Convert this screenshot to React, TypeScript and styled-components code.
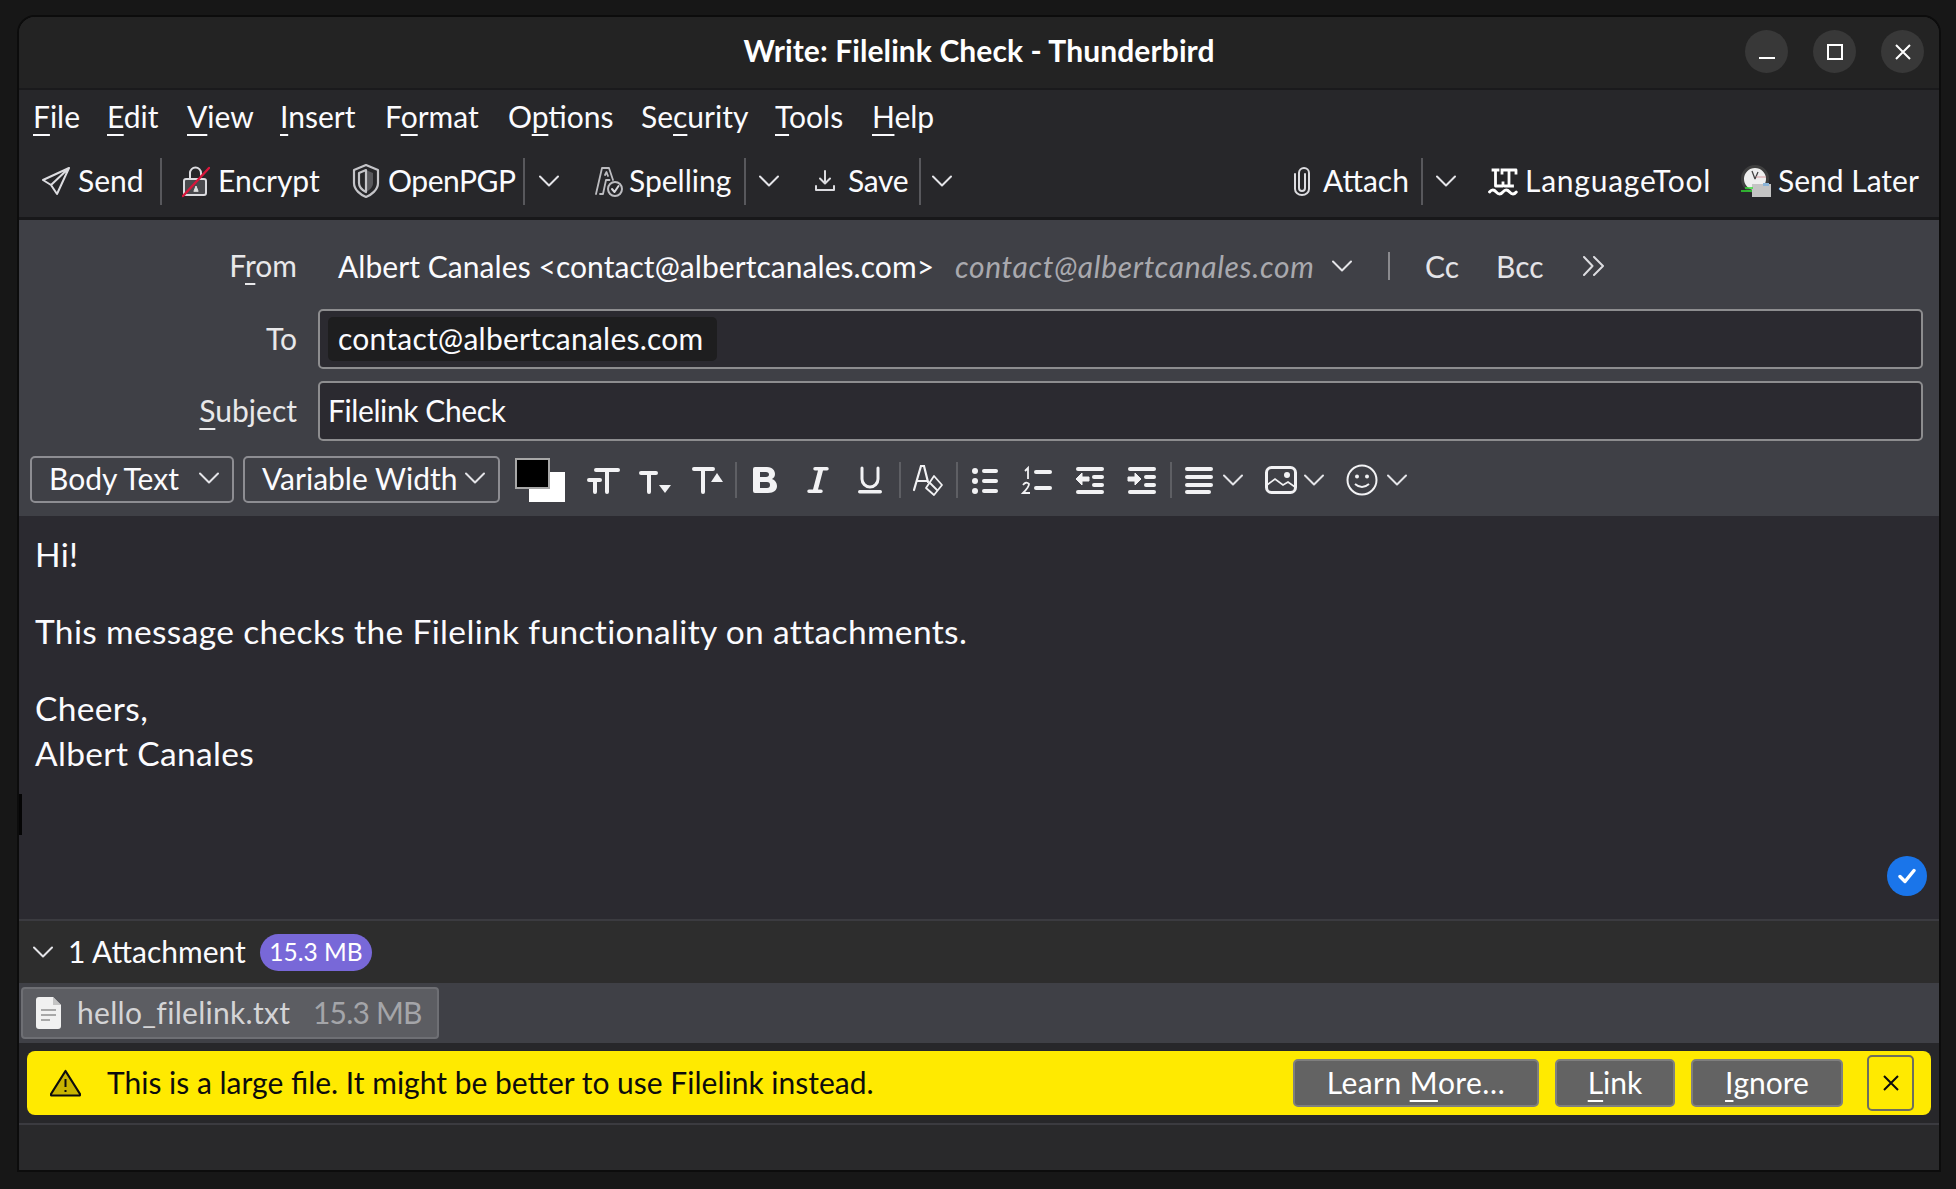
import React from "react";
import styled, { createGlobalStyle } from "styled-components";

const Global = createGlobalStyle`
  html, body { margin: 0; padding: 0; background: #171717; }
  body { font-family: "Lato", "Noto Sans", sans-serif; color: #fbfbfe; }
  #root { width: 1956px; height: 1189px; overflow: hidden; }
`;

const Desktop = styled.div`
  width: 1956px; height: 1189px; box-sizing: border-box;
  padding: 15px 15px 17px 17px; background: #171717; display: flex;
`;
const Win = styled.div`
  flex: 1; display: flex; flex-direction: column; position: relative;
  border: 2px solid #0c0c0c; border-radius: 18px 18px 0 0; overflow: hidden; background: #27272a;
`;
const TitleBar = styled.div`
  height: 71px; flex: none; background: #232323; border-bottom: 2px solid #1a1a1c; display: flex; box-sizing: content-box;
  align-items: center; justify-content: center; position: relative;
`;
const TitleText = styled.div`
  font: 700 30px "Lato", sans-serif; color: #fff; letter-spacing: 0.1px; margin-bottom: 5px;
`;
const WinButtons = styled.div`
  position: absolute; right: 15px; top: 13px; display: flex; gap: 25px;
`;
const WinButton = styled.div`
  width: 43px; height: 43px; border-radius: 50%; background: #383838; display: flex; align-items: center; justify-content: center;
`;
const MenuBar = styled.div`
  height: 55px; flex: none; background: #27272a; display: flex; align-items: center; padding: 0 0 3px 14px; box-sizing: border-box;
  font-size: 30px;
`;
const MenuItem = styled.div<{ $w: number }>`
  width: ${(p) => p.$w}px; white-space: nowrap;
`;
const Key = styled.span`
  text-decoration: underline; text-decoration-thickness: 2px; text-underline-offset: 6px; text-decoration-skip-ink: none;
`;
const ToolBar = styled.div`
  height: 72px; flex: none; background: #27272a; border-bottom: 3px solid #18181a; box-sizing: content-box;
  display: flex; align-items: center; padding: 0 20px 0 23px; font-size: 30px;
`;
const Spacer = styled.div` flex: 1; `;
const ToolIcon = styled.svg<{ $ml?: number }>`
  flex: none; margin-left: ${(p) => p.$ml ?? 0}px; fill: none; stroke: #dcdce0; stroke-width: 2; stroke-linecap: round; stroke-linejoin: round;
`;
const ToolLabel = styled.span<{ $ml?: number; $w: number; $ls?: number }>`
  margin-left: ${(p) => p.$ml ?? 8}px; margin-bottom: 2px; width: ${(p) => p.$w}px; white-space: nowrap; flex: none; letter-spacing: ${(p) => p.$ls ?? 0}px;
`;
const ToolSep = styled.div<{ $ml: number }>`
  width: 2px; height: 47px; margin-left: ${(p) => p.$ml}px; background: #58585c; flex: none;
`;
const Header = styled.div`
  background: #3f4046; flex: none; height: 230px; box-sizing: border-box; padding: 17px 16px 0 0; display: flex; flex-direction: column;
`;
const Row = styled.div`
  display: flex; align-items: center; height: 60px; margin-bottom: 12px; font-size: 30px; flex: none;
`;
const RowLabel = styled.div`
  width: 278px; flex: none; text-align: right; margin-right: 21px; white-space: nowrap; color: #e8e8ea; margin-bottom: 2px;
`;
const FromRow = styled(Row)`
  height: 58px; margin-bottom: 14px;
`;
const Identity = styled.span` margin-left: 20px; width: 617px; white-space: nowrap; flex: none; letter-spacing: 0.06px; `;
const IdentityMail = styled.span` font-style: italic; color: #a9a9ae; width: 377px; white-space: nowrap; flex: none; letter-spacing: 0.65px; `;
const Bar = styled.div` width: 2px; height: 28px; background: #8a8a8e; margin-left: 36px; `;
const RowLink = styled.span<{ $ml: number }>` margin-left: ${(p) => p.$ml}px; color: #e4e4e8; `;
const Field = styled.div<{ $ls?: number }>`
  flex: 1; height: 100%; box-sizing: border-box; background: #2b2a30; border: 2px solid #8d8d8f; border-radius: 5px;
  display: flex; align-items: center; padding: 0 0 2px 8px; letter-spacing: ${(p) => p.$ls ?? 0}px;
`;
const Pill = styled.span`
  background: #1e1e1f; border-radius: 5px; height: 44px; margin-top: 2px; display: inline-flex; align-items: center; padding: 0 13px 2px 10px; box-sizing: border-box; font-size: 30px; letter-spacing: 0.25px;
`;
const FormatBar = styled.div`
  background: #3f4046; height: 67px; flex: none; margin-top: -1px; display: flex; align-items: center; padding-left: 11px; padding-bottom: 6px; box-sizing: border-box;
`;
const Select = styled.div<{ $w: number; $ml?: number }>`
  width: ${(p) => p.$w}px; margin-left: ${(p) => p.$ml ?? 0}px; height: 47px; box-sizing: border-box; border: 2px solid #8d8d92; border-radius: 5px;
  display: flex; align-items: center; justify-content: space-between; padding: 0 13px 3px 17px; font-size: 30px; flex: none; white-space: nowrap;
`;
const Colors = styled.div`
  width: 50px; height: 44px; margin-left: 15px; position: relative; flex: none;
`;
const Fore = styled.div`
  position: absolute; left: 0; top: 0; width: 35px; height: 31px; box-sizing: border-box; background: #000; border: 2px solid #a8a8a8; z-index: 1;
`;
const Back = styled.div`
  position: absolute; left: 14px; top: 14px; width: 36px; height: 30px; background: #fff;
`;
const FmtSep = styled.div<{ $ml: number }>`
  width: 2px; height: 36px; background: #5e5f64; margin-left: ${(p) => p.$ml}px; flex: none;
`;
const FmtIcon = styled.svg<{ $ml: number }>`
  flex: none; margin-left: ${(p) => p.$ml}px; color: #f2f2f4; overflow: visible;
`;
const Body = styled.div`
  flex: 1; background: #2b2a30; padding: 16px 0 0 16px; font-size: 33.5px; letter-spacing: 0.35px; line-height: 45px; position: relative; box-sizing: border-box; border-bottom: 2px solid #3b3b40;
`;
const Para = styled.p` margin: 0 0 32px; white-space: nowrap; `;
const Check = styled.div`
  position: absolute; right: 12px; bottom: 23px; width: 40px; height: 40px; border-radius: 50%; background: #1a75ea; display: flex; align-items: center; justify-content: center;
`;
const Resize = styled.div`
  position: absolute; left: 0; top: 777px; width: 3px; height: 41px; background: #050505;
`;
const AttachHead = styled.div`
  height: 62px; flex: none; background: #2d2d2d; display: flex; align-items: center; padding-left: 14px; font-size: 30px;
`;
const Badge = styled.span`
  margin-left: 13px; width: 112px; height: 37px; box-sizing: border-box; padding-bottom: 1px; border-radius: 19px; background: #7868d8; color: #fff; font-size: 24.5px; display: flex; align-items: center; justify-content: center;
`;
const AttachList = styled.div`
  height: 60px; flex: none; background: #3f4046; padding: 4px 0 4px 2px; box-sizing: border-box; display: flex;
`;
const AttachItem = styled.div`
  width: 418px; box-sizing: border-box; background: #5c5d62; border: 2px solid #6e6f74; border-radius: 4px; display: flex; align-items: center; padding: 0 0 0 13px; font-size: 30px; color: #d4d4d6;
`;
const FileName = styled.span` margin-left: 16px; width: 236px; white-space: nowrap; letter-spacing: 0.3px; margin-bottom: 2px; `;
const FileSize = styled.span` color: #a4a5a9; white-space: nowrap; letter-spacing: -0.8px; margin-bottom: 2px; `;
const NoticeArea = styled.div`
  height: 82px; flex: none; padding: 8px 8px 8px 8px; box-sizing: border-box; background: #27272a; border-bottom: 2px solid #3b3b40;
`;
const Notice = styled.div`
  height: 64px; background: #ffea00; border-radius: 8px; display: flex; align-items: center; color: #0c0c0d; font-size: 30px; padding-left: 23px;
`;
const NoticeText = styled.span` margin-left: 26px; margin-bottom: 2px; white-space: nowrap; width: 1186px; flex: none; `;
const NoticeBtn = styled.div<{ $w: number; $ml: number; $ls?: number }>`
  width: ${(p) => p.$w}px; margin-left: ${(p) => p.$ml}px; height: 48px; box-sizing: border-box; background: #636363; border: 2px solid #7f7f7f; border-radius: 5px; color: #fff;
  display: flex; align-items: center; justify-content: center; flex: none; white-space: nowrap; padding-bottom: 3px; letter-spacing: ${(p) => p.$ls ?? 0}px;
`;
const CloseBtn = styled.div`
  width: 47px; height: 56px; margin-left: 24px; box-sizing: border-box; border: 2px solid #6e6e5e; border-radius: 5px; display: flex; align-items: center; justify-content: center;
`;
const StatusBar = styled.div` height: 45px; flex: none; background: #29292b; `;

const Chev = ({ ml = 0, w = 20, color = "#e4e4e8" }: { ml?: number; w?: number; color?: string }) => (
  <ToolIcon $ml={ml} width={w} height={12} viewBox="0 0 20 12" style={{ stroke: color }}>
    <path d="M1 1.5 L10 10.5 L19 1.5" />
  </ToolIcon>
);

const F = (p: React.SVGProps<SVGPathElement>) => <path fill="currentColor" {...p} />;

export default function App() {
  return (
    <Desktop>
      <Global />
      <Win>
        <TitleBar>
          <TitleText>Write: Filelink Check - Thunderbird</TitleText>
          <WinButtons>
            <WinButton>
              <svg width="16" height="16" viewBox="0 0 16 16"><rect x="0" y="13" width="16" height="2" fill="#fff" /></svg>
            </WinButton>
            <WinButton>
              <svg width="16" height="16" viewBox="0 0 16 16"><rect x="1" y="1" width="14" height="14" fill="none" stroke="#fff" strokeWidth="2" /></svg>
            </WinButton>
            <WinButton>
              <svg width="16" height="16" viewBox="0 0 16 16"><path d="M1 1 L15 15 M15 1 L1 15" stroke="#fff" strokeWidth="2" /></svg>
            </WinButton>
          </WinButtons>
        </TitleBar>
        <MenuBar>
          <MenuItem $w={74}><Key>F</Key>ile</MenuItem>
          <MenuItem $w={80}><Key>E</Key>dit</MenuItem>
          <MenuItem $w={93}><Key>V</Key>iew</MenuItem>
          <MenuItem $w={105}><Key>I</Key>nsert</MenuItem>
          <MenuItem $w={123}>F<Key>o</Key>rmat</MenuItem>
          <MenuItem $w={133}>O<Key>p</Key>tions</MenuItem>
          <MenuItem $w={134}>Se<Key>c</Key>urity</MenuItem>
          <MenuItem $w={97}><Key>T</Key>ools</MenuItem>
          <MenuItem $w={80}><Key>H</Key>elp</MenuItem>
        </MenuBar>
        <ToolBar>
          <ToolIcon width="28" height="30" viewBox="0 0 28 30">
            <path d="M27 2 L1 14 L9 19 L15 28 Z M27 2 L9 19" />
          </ToolIcon>
          <ToolLabel $w={64}>Send</ToolLabel>
          <ToolSep $ml={18} />
          <ToolIcon $ml={20} width="28" height="34" viewBox="0 0 28 34">
            <path d="M8 15 V9 a5.500 5.500 0 0 1 11 0 V11" />
            <path d="M4 15 H22 a2 2 0 0 1 2 2 V29 a2 2 0 0 1 -2 2 H4 a2 2 0 0 1 -2 -2 V17 a2 2 0 0 1 2 -2 Z" style={{ fill: "#4a4a4e" }} />
            <path d="M12 27 L14 22 L16 27 Z" style={{ fill: "#e0e0e0", stroke: "#e0e0e0", strokeWidth: 1 }} />
            <path d="M1 32 L27 4" style={{ stroke: "#d8173c", strokeWidth: 2.400 }} />
          </ToolIcon>
          <ToolLabel $w={101}>Encrypt</ToolLabel>
          <ToolIcon $ml={33} width="28" height="34" viewBox="0 0 28 34">
            <path d="M14 1 L26 6 V19 C26 26 19 31 14 33 C9 31 2 26 2 19 V6 Z" style={{ stroke: "#c4c4c8", strokeWidth: 2.200 }} />
            <path d="M14 6 L21 9 V19 C21 23 18 26 14 28 Z" style={{ fill: "#58585c", stroke: "none" }} />
            <path d="M14 6 L7 9 V19 C7 23 10 26 14 28 Z" style={{ stroke: "#c4c4c8", strokeWidth: 2.200 }} />
          </ToolIcon>
          <ToolLabel $w={126} $ls={-0.45}>OpenPGP</ToolLabel>
          <ToolSep $ml={9} />
          <Chev ml={14} />
          <ToolIcon $ml={36} width="28" height="32" viewBox="0 0 28 32">
            <path d="M1 29 L7 3 H14 L18 15 M5 29 H8 L11 15 H14.500 M10 10 L11.500 7 L13 11" style={{ stroke: "#bcbcc0", strokeWidth: 1.800 }} />
            <circle cx="20" cy="24" r="7" style={{ stroke: "#bcbcc0", fill: "#27272a" }} />
            <path d="M17 24 L19.500 27 L23.500 21" style={{ stroke: "#d8d8dc" }} />
          </ToolIcon>
          <ToolLabel $ml={6} $w={103}>Spelling</ToolLabel>
          <ToolSep $ml={12} />
          <Chev ml={13} />
          <ToolIcon $ml={36} width="20" height="22" viewBox="0 0 20 22">
            <path d="M10 1 V13 M5 8.500 L10 13.500 L15 8.500 M1 16 V20 H19 V16" />
          </ToolIcon>
          <ToolLabel $ml={13} $w={59} $ls={-0.3}>Save</ToolLabel>
          <ToolSep $ml={12} />
          <Chev ml={11} />
          <Spacer />
          <ToolIcon width="16" height="30" viewBox="0 0 16 30">
            <path d="M11 8 V22 a3 3 0 0 1 -6 0 V7 a5 5 0 0 1 10 0 V23 a7 6 0 0 1 -14 0 V8" />
          </ToolIcon>
          <ToolLabel $ml={13} $w={87}>Attach</ToolLabel>
          <ToolSep $ml={11} />
          <Chev ml={13} />
          <ToolIcon $ml={32} width="30" height="30" viewBox="0 0 30 30" style={{ stroke: "#fff", strokeWidth: 2.800, strokeLinecap: "square" }}>
            <path d="M5 4 H10 M7.500 4 V20 H15 V17 M14 4 H28 V7 M14 4 V7 M21 4 V20 M17.500 20 H24.500" />
            <path d="M1.500 26 q3.300 -4 6.700 0 t6.700 0 t6.700 0 t6.700 0" style={{ strokeLinecap: "round" }} />
          </ToolIcon>
          <ToolLabel $ml={7} $w={185} $ls={0.75}>LanguageTool</ToolLabel>
          <svg width="30" height="32" viewBox="0 0 30 32" style={{ marginLeft: 31, flex: "none" }}>
            <circle cx="14" cy="14" r="12.500" fill="#eeeeee" stroke="#3f3f3f" strokeWidth="3" />
            <path d="M14 14 L11 6 M14 14 L17 7" stroke="#444" strokeWidth="1.300" />
            <path d="M15 12 H25" stroke="#d89aa0" strokeWidth="1" />
            <rect x="11" y="19" width="19" height="13" fill="#c4c4c4" />
            <rect x="22" y="18" width="6" height="3" fill="#8ab4d8" />
            <path d="M0 26 H11 M4 23 H12" stroke="#33dd33" strokeWidth="1.600" />
          </svg>
          <ToolLabel $ml={7} $w={141}>Send Later</ToolLabel>
        </ToolBar>
        <Header>
          <FromRow>
            <RowLabel>F<Key>r</Key>om</RowLabel>
            <Identity>Albert Canales &lt;contact@albertcanales.com&gt;</Identity>
            <IdentityMail>contact@albertcanales.com</IdentityMail>
            <Chev />
            <Bar />
            <RowLink $ml={35}>Cc</RowLink>
            <RowLink $ml={37}>Bcc</RowLink>
            <ToolIcon $ml={39} width="22" height="20" viewBox="0 0 22 20">
              <path d="M1 1 L9.500 10 L1 19 M11 1 L20 10 L11 19" />
            </ToolIcon>
          </FromRow>
          <Row>
            <RowLabel>To</RowLabel>
            <Field><Pill>contact@albertcanales.com</Pill></Field>
          </Row>
          <Row>
            <RowLabel><Key>S</Key>ubject</RowLabel>
            <Field $ls={-0.4}>Filelink Check</Field>
          </Row>
        </Header>
        <FormatBar>
          <Select $w={204}>Body Text <Chev /></Select>
          <Select $w={257} $ml={9}>Variable Width <Chev /></Select>
          <Colors><Fore /><Back /></Colors>
          <FmtIcon $ml={22} width="33" height="28" viewBox="0 0 33 28">
            <F d="M9 2 H31 a2 2 0 0 1 0 4 H22 V26 a2 2 0 0 1 -4 0 V6 H9 a2 2 0 0 1 0 -4 Z" />
            <F d="M2 12 H13 a2 2 0 0 1 0 4 H10 V26 a2 2 0 0 1 -4 0 V16 H2 a2 2 0 0 1 0 -4 Z" />
          </FmtIcon>
          <FmtIcon $ml={19} width="32" height="28" viewBox="0 0 32 28">
            <F d="M2 5 H17 a2 2 0 0 1 0 4 H12 V26 a2 2 0 0 1 -4 0 V9 H2 a2 2 0 0 1 0 -4 Z" />
            <F d="M20 19 H32 L26 27 Z" />
          </FmtIcon>
          <FmtIcon $ml={21} width="30" height="28" viewBox="0 0 30 28">
            <F d="M2 1 H21 a2 2 0 0 1 0 4 H13 V26 a2 2 0 0 1 -4 0 V5 H2 a2 2 0 0 1 0 -4 Z" />
            <F d="M19 16 H31 L25 7 Z" />
          </FmtIcon>
          <FmtSep $ml={13} />
          <FmtIcon $ml={16} width="24" height="28" viewBox="0 0 24 28">
            <path fillRule="evenodd" fill="currentColor" d="M2 1 H14 C20 1 22 5 22 8 C22 10 21 12 19 13 C22 14 24 17 24 20 C24 24 21 27 15 27 H2 a2 2 0 0 1 -2 -2 V3 a2 2 0 0 1 2 -2 Z M7 6 V11 H13 C15 11 16 10 16 8.500 C16 7 15 6 13 6 Z M7 16 V22 H14 C16 22 17 21 17 19 C17 17 16 16 14 16 Z" />
          </FmtIcon>
          <FmtIcon $ml={31} width="20" height="28" viewBox="0 0 20 28">
            <F d="M7 1 H19 a1.500 1.500 0 0 1 0 3.500 H15 L10 23.500 H13 a1.500 1.500 0 0 1 0 3.500 H1 a1.500 1.500 0 0 1 0 -3.500 H5 L10 4.500 H7 a1.500 1.500 0 0 1 0 -3.500 Z" />
          </FmtIcon>
          <FmtIcon $ml={30} width="24" height="28" viewBox="0 0 24 28">
            <path d="M4 2 V13 a8 8 0 0 0 16 0 V2" fill="none" stroke="currentColor" strokeWidth="3" strokeLinecap="round" />
            <rect x="0" y="24" width="24" height="3.500" rx="1.700" fill="currentColor" />
          </FmtIcon>
          <FmtSep $ml={17} />
          <FmtIcon $ml={12} width="30" height="32" viewBox="0 0 30 32">
            <path d="M1 26 L8 2 H11 L15 18 M5 17 H13" fill="none" stroke="currentColor" strokeWidth="2.200" strokeLinecap="round" />
            <path d="M21 12 L29 21 L21 31 L13 24 Z M16 18 L25 27" fill="none" stroke="currentColor" strokeWidth="1.800" strokeLinejoin="round" />
          </FmtIcon>
          <FmtSep $ml={13} />
          <FmtIcon $ml={14} width="26" height="28" viewBox="0 0 26 28">
            <circle cx="3" cy="5" r="3" fill="currentColor" /><circle cx="3" cy="15" r="3" fill="currentColor" /><circle cx="3" cy="25" r="3" fill="currentColor" />
            <rect x="10" y="3" width="16" height="4" rx="2" fill="currentColor" /><rect x="10" y="13" width="16" height="4" rx="2" fill="currentColor" /><rect x="10" y="23" width="16" height="4" rx="2" fill="currentColor" />
          </FmtIcon>
          <FmtIcon $ml={24} width="30" height="28" viewBox="0 0 30 28">
            <path d="M3 5 L6 2 V13" fill="none" stroke="currentColor" strokeWidth="1.800" />
            <path d="M1 19 Q4 15 7 18 Q7 21 1 27 H8" fill="none" stroke="currentColor" strokeWidth="1.800" />
            <rect x="12" y="4" width="18" height="4" rx="2" fill="currentColor" /><rect x="12" y="20" width="18" height="4" rx="2" fill="currentColor" />
          </FmtIcon>
          <FmtIcon $ml={24} width="28" height="28" viewBox="0 0 28 28">
            <rect x="0" y="1" width="28" height="4" rx="2" fill="currentColor" /><rect x="16" y="9" width="12" height="4" rx="2" fill="currentColor" /><rect x="16" y="17" width="12" height="4" rx="2" fill="currentColor" /><rect x="0" y="24" width="28" height="4" rx="2" fill="currentColor" />
            <path d="M0 13 L6 7 V11 H13 V15 H6 V19 Z" fill="currentColor" stroke="currentColor" strokeLinejoin="round" />
          </FmtIcon>
          <FmtIcon $ml={24} width="28" height="28" viewBox="0 0 28 28">
            <rect x="0" y="1" width="28" height="4" rx="2" fill="currentColor" /><rect x="16" y="9" width="12" height="4" rx="2" fill="currentColor" /><rect x="16" y="17" width="12" height="4" rx="2" fill="currentColor" /><rect x="0" y="24" width="28" height="4" rx="2" fill="currentColor" />
            <path d="M13 13 L7 7 V11 H0 V15 H7 V19 Z" fill="currentColor" stroke="currentColor" strokeLinejoin="round" />
          </FmtIcon>
          <FmtSep $ml={14} />
          <FmtIcon $ml={13} width="28" height="28" viewBox="0 0 28 28">
            <rect x="0" y="1" width="28" height="4" rx="2" fill="currentColor" /><rect x="0" y="9" width="28" height="4" rx="2" fill="currentColor" /><rect x="0" y="17" width="28" height="4" rx="2" fill="currentColor" /><rect x="0" y="24" width="26" height="4" rx="2" fill="currentColor" />
          </FmtIcon>
          <Chev ml={10} />
          <FmtIcon $ml={22} width="32" height="28" viewBox="0 0 32 28">
            <rect x="1.500" y="1.500" width="29" height="25" rx="5" fill="none" stroke="currentColor" strokeWidth="3" />
            <circle cx="22" cy="9" r="3" fill="currentColor" />
            <path d="M2 19 L10 13 L18 19 L23 16 L30 21" fill="none" stroke="currentColor" strokeWidth="1.600" />
          </FmtIcon>
          <Chev ml={7} />
          <FmtIcon $ml={22} width="32" height="32" viewBox="0 0 32 32">
            <circle cx="16" cy="16" r="14.500" fill="none" stroke="currentColor" strokeWidth="2" />
            <circle cx="11" cy="12.500" r="2" fill="currentColor" /><circle cx="21" cy="12.500" r="2" fill="currentColor" />
            <path d="M9 20 Q16 26 23 20" fill="none" stroke="currentColor" strokeWidth="2" />
          </FmtIcon>
          <Chev ml={9} />
        </FormatBar>
        <Body>
          <Para>Hi!</Para>
          <Para>This message checks the Filelink functionality on attachments.</Para>
          <Para>Cheers,<br />Albert Canales</Para>
          <Check>
            <svg width="18" height="16" viewBox="0 0 18 16"><path d="M2 8.500 L7 13.500 L16 2.500" fill="none" stroke="#fff" strokeWidth="3.400" strokeLinecap="round" strokeLinejoin="round" /></svg>
          </Check>
        </Body>
        <AttachHead>
          <Chev />
          <ToolLabel $ml={15} $w={179}>1 Attachment</ToolLabel>
          <Badge>15.3 MB</Badge>
        </AttachHead>
        <AttachList>
          <AttachItem>
            <svg width="25" height="32" viewBox="0 0 25 32">
              <path d="M3 0 H17 L25 8 V29 a3 3 0 0 1 -3 3 H3 a3 3 0 0 1 -3 -3 V3 a3 3 0 0 1 3 -3 Z" fill="#f1f1f1" />
              <path d="M17 0 L25 8 H17 Z" fill="#c4c4c4" />
              <path d="M5 13 H20 M5 18 H20 M5 23 H14" stroke="#a8a8a8" strokeWidth="2" />
            </svg>
            <FileName>hello_filelink.txt</FileName>
            <FileSize>15.3 MB</FileSize>
          </AttachItem>
        </AttachList>
        <NoticeArea>
          <Notice>
            <svg width="31" height="28" viewBox="0 0 31 28">
              <path d="M15.500 2 L30 25 a1 1 0 0 1 -1 1.500 H2 a1 1 0 0 1 -1 -1.500 Z" fill="#c8b400" stroke="#0c0c0d" strokeWidth="2.200" strokeLinejoin="round" />
              <path d="M15.500 10 V18 M15.500 21 V23" stroke="#0c0c0d" strokeWidth="2" />
            </svg>
            <NoticeText>This is a large file. It might be better to use Filelink instead.</NoticeText>
            <NoticeBtn $w={246} $ml={0} $ls={0.4}>Learn&nbsp;<Key>M</Key>ore…</NoticeBtn>
            <NoticeBtn $w={120} $ml={16}><Key>L</Key>ink</NoticeBtn>
            <NoticeBtn $w={152} $ml={16}><Key>I</Key>gnore</NoticeBtn>
            <CloseBtn>
              <svg width="16" height="16" viewBox="0 0 16 16"><path d="M1 1 L15 15 M15 1 L1 15" stroke="#0c0c0d" strokeWidth="2" /></svg>
            </CloseBtn>
          </Notice>
        </NoticeArea>
        <StatusBar />
        <Resize />
      </Win>
    </Desktop>
  );
}
